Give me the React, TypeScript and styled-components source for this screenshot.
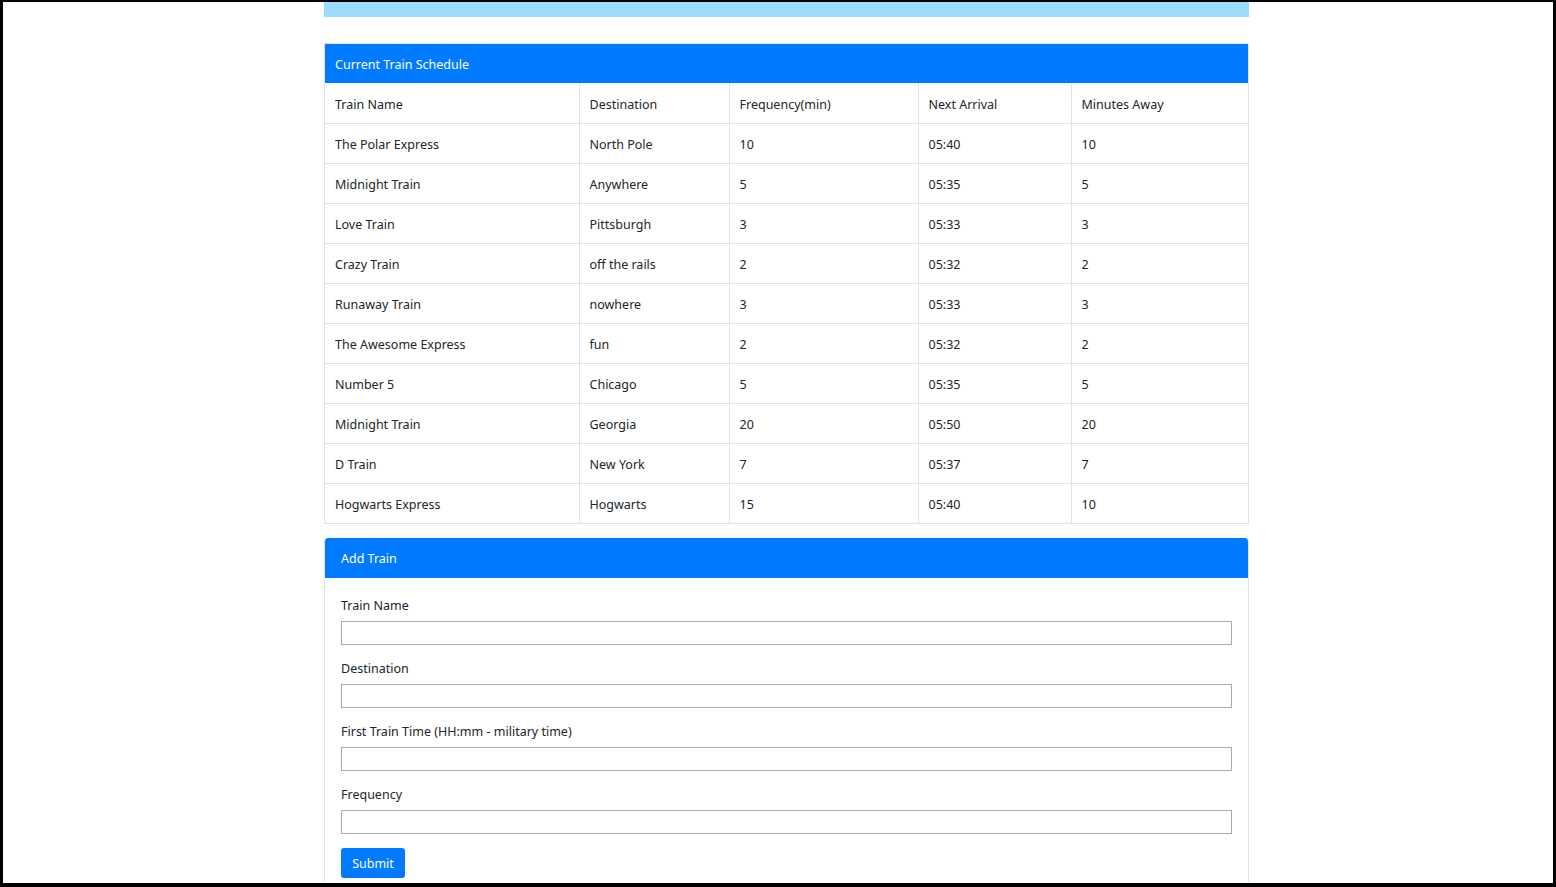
import React from "react";
import styled, { createGlobalStyle } from "styled-components";

const Global = createGlobalStyle`
  html, body { margin: 0; padding: 0; background: #fff; }
  body { font-family: "Noto Sans", "Open Sans", sans-serif; color: #212529; }
  * { box-sizing: border-box; }
`;

const Frame = styled.div`
  width: 1556px;
  height: 887px;
  border-style: solid;
  border-color: #000;
  border-width: 2px 3px 4px 3px;
  overflow: hidden;
  background: #fff;
`;

const Column = styled.div`
  width: 925px;
  margin-left: 321px;
  display: flex;
  flex-direction: column;
`;

const Banner = styled.div`
  height: 15px;
  background: #9bdcfe;
  margin-bottom: 26px;
`;

const Card = styled.section<{ $rounded?: boolean }>`
  border: 1px solid #dfe2e6;
  border-radius: ${(p) => (p.$rounded ? "4px" : "0")};
  overflow: hidden;
  margin-bottom: 14px;
  ${(p) => (p.$rounded ? "border-top: none;" : "")}
`;

const CardHeader = styled.div<{ $pad: number; $h: number }>`
  background: #007bff;
  color: #fff;
  height: ${(p) => p.$h}px;
  display: flex;
  align-items: center;
  padding-left: ${(p) => p.$pad}px;
  padding-top: 1px;
  font-size: 12.5px;
`;

const Table = styled.table`
  width: 100%;
  border-collapse: collapse;
  table-layout: fixed;
  font-size: 12.5px;
`;

const Cell = styled.td`
  height: 40px;
  padding: 2px 10px 0;
  border-top: 1px solid #dfe2e6;
  border-left: 1px solid #dfe2e6;
  vertical-align: middle;
  &:first-child { border-left: none; }
`;

const Row = styled.tr`
  &:first-child td { border-top: none; padding-top: 4px; }
`;

const FormBody = styled.form`
  padding: 18px 16px 40px;
  display: flex;
  flex-direction: column;
`;

const Group = styled.div`
  display: flex;
  flex-direction: column;
  margin-bottom: 14px;
`;

const Label = styled.label`
  font-size: 12.5px;
  line-height: 18px;
  padding-top: 1px;
  margin: 0 0 6px;
  color: #212529;
`;

const Input = styled.input`
  height: 24px;
  width: 100%;
  border: 1px solid #a9a9a9;
  border-radius: 0;
  padding: 0 4px;
  font-size: 13px;
  font-family: inherit;
`;

const Button = styled.button`
  align-self: flex-start;
  background: #007bff;
  color: #fff;
  border: none;
  border-radius: 3px;
  height: 30px;
  width: 64px;
  font-size: 12.5px;
  font-family: inherit;
  padding: 1px 0 0;
`;

const columns = [254, 150, 189, 153, 179];
const head = ["Train Name", "Destination", "Frequency(min)", "Next Arrival", "Minutes Away"];
const rows = [
  ["The Polar Express", "North Pole", "10", "05:40", "10"],
  ["Midnight Train", "Anywhere", "5", "05:35", "5"],
  ["Love Train", "Pittsburgh", "3", "05:33", "3"],
  ["Crazy Train", "off the rails", "2", "05:32", "2"],
  ["Runaway Train", "nowhere", "3", "05:33", "3"],
  ["The Awesome Express", "fun", "2", "05:32", "2"],
  ["Number 5", "Chicago", "5", "05:35", "5"],
  ["Midnight Train", "Georgia", "20", "05:50", "20"],
  ["D Train", "New York", "7", "05:37", "7"],
  ["Hogwarts Express", "Hogwarts", "15", "05:40", "10"],
];

const fields = ["Train Name", "Destination", "First Train Time (HH:mm - military time)", "Frequency"];

export default function App() {
  return (
    <>
      <Global />
      <Frame>
        <Column>
          <Banner />
          <Card>
            <CardHeader $pad={10} $h={39}>Current Train Schedule</CardHeader>
            <Table>
              <colgroup>
                {columns.map((w, i) => (
                  <col key={i} style={{ width: w }} />
                ))}
              </colgroup>
              <tbody>
                <Row>
                  {head.map((h) => (
                    <Cell key={h}>{h}</Cell>
                  ))}
                </Row>
                {rows.map((r, i) => (
                  <Row key={i}>
                    {r.map((c, j) => (
                      <Cell key={j}>{c}</Cell>
                    ))}
                  </Row>
                ))}
              </tbody>
            </Table>
          </Card>
          <Card $rounded>
            <CardHeader $pad={16} $h={40}>Add Train</CardHeader>
            <FormBody onSubmit={(e) => e.preventDefault()}>
              {fields.map((f) => (
                <Group key={f}>
                  <Label>{f}</Label>
                  <Input type="text" />
                </Group>
              ))}
              <Button type="submit">Submit</Button>
            </FormBody>
          </Card>
        </Column>
      </Frame>
    </>
  );
}
